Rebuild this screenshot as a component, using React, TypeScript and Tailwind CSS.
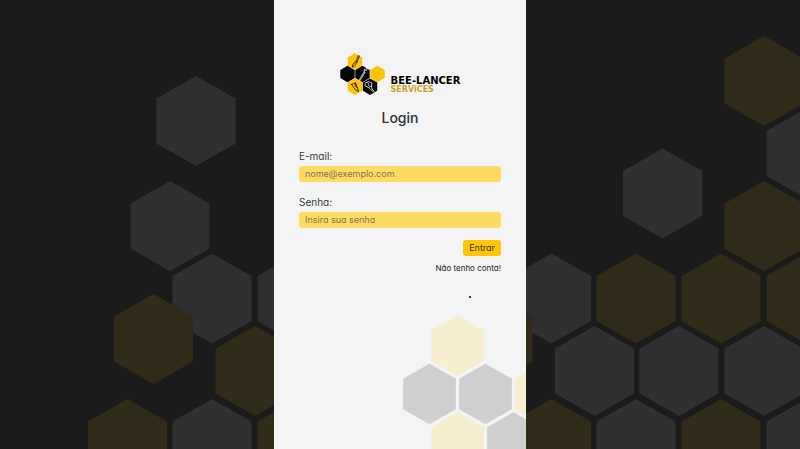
type Tone = "gray" | "gold" | "black" | "yellow" | "stone" | "cream";

type Cell = [number, number, Tone];

const fills: Record<Tone, string> = {
  gray: "#303030",
  gold: "#312c19",
  black: "#050505",
  yellow: "#fcc204",
  stone: "#cfcfcf",
  cream: "#f7eed0",
};

const backdrop: Cell[] = [
  [196, 121, "gray"],
  [170, 226, "gray"],
  [212, 298.5, "gray"],
  [297, 298.5, "gray"],
  [153.5, 339, "gold"],
  [255, 371, "gold"],
  [127.5, 444, "gold"],
  [212, 444, "gray"],
  [297, 444, "gold"],
  [551.5, 298.5, "gray"],
  [493, 339, "gold"],
  [636, 298.5, "gold"],
  [721, 298.5, "gold"],
  [806, 298.5, "gold"],
  [764, 226, "gold"],
  [764, 81, "gold"],
  [806, 153.5, "gray"],
  [662.5, 193.5, "gray"],
  [594.5, 371, "gray"],
  [679, 371, "gray"],
  [764, 371, "gray"],
  [551.5, 444, "gold"],
  [636, 444, "gray"],
  [721, 444, "gold"],
  [806, 444, "gray"],
];

const corner: Cell[] = [
  [54.5, 30.5, "cream"],
  [26.5, 79, "stone"],
  [82.5, 79, "stone"],
  [138.5, 79, "cream"],
  [54.5, 127.5, "cream"],
  [110.5, 127.5, "stone"],
];

const emblem: Cell[] = [
  [15, 8.5, "yellow"],
  [7.5, 21, "black"],
  [22.5, 21, "black"],
  [37.5, 21, "yellow"],
  [15, 33.7, "yellow"],
  [30, 33.7, "black"],
];

function Comb({ cells, w, h }: { cells: Cell[]; w: number; h: number }) {
  return (
    <>
      {cells.map(([x, y, tone]) => (
        <polygon
          key={`${x}-${y}`}
          fill={fills[tone]}
          points={`${x},${y - h} ${x + w},${y - h / 2} ${x + w},${y + h / 2} ${x},${y + h} ${x - w},${y + h / 2} ${x - w},${y - h / 2}`}
        />
      ))}
    </>
  );
}

function Logo() {
  return (
    <div className="flex items-end gap-[6px]">
      <svg viewBox="0 0 45 43" className="h-[43px] w-[45px]" aria-hidden="true">
        <Comb cells={emblem} w={7.2} h={8.2} />
        <g fill="none" strokeWidth="0.8" strokeLinecap="round" strokeLinejoin="round">
          <path stroke="#17130a" d="M18.500 2.500l-2.500 6M19.500 3l-2.500 6M16.500 8.500l-3.500 2.500-.8 3 2-.5 3-4.500" />
          <path stroke="#eee" d="M28.500 15l-4 1.500-.5 2.500-5.500 9M24.500 17l2 .5M24 19l1 .5-5 8M28.500 15l-.5 1.500" />
          <path stroke="#17130a" d="M11.500 31.500l4-1.500 2 5 1 3.500-3-1.500-4-5.500zM15.500 30l-.5 3 2.500 2" />
          <path stroke="#eee" d="M25.500 30l3-1.500 3.500 1.500-.5 3-3 1.500-3-1.500zM28 30l1 2.500M31.500 33l.5 3 2.500 3M29 35l4 3.500" />
        </g>
      </svg>
      <div className="flex flex-col pb-0.5 font-['DejaVu_Sans',sans-serif] font-bold">
        <span className="text-[10px] leading-[10px] text-black">BEE-LANCER</span>
        <span className="text-[8px] leading-[8px] text-[#c9a227]">SERViCES</span>
      </div>
    </div>
  );
}

function Field({ id, label, type, placeholder }: { id: string; label: string; type: string; placeholder: string }) {
  return (
    <div className="flex flex-col gap-[2px]">
      <label htmlFor={id} className="text-[10px] leading-4 text-[#333a42]">
        {label}
      </label>
      <input
        id={id}
        type={type}
        placeholder={placeholder}
        className="h-4 w-full rounded-[3px] bg-[#ffdb64] px-1.5 text-[9px] leading-4 text-[#333a42] outline-none placeholder:text-[#7f754f]"
      />
    </div>
  );
}

export default function App() {
  return (
    <div className="relative isolate flex min-h-screen justify-center overflow-hidden bg-[#1b1b1b] font-['Inter','Noto_Sans',sans-serif] [font-feature-settings:'cv11','ss03']">
      <svg
        viewBox="0 0 800 449"
        preserveAspectRatio="xMidYMid slice"
        className="absolute inset-0 -z-10 h-full w-full"
        aria-hidden="true"
      >
        <Comb cells={backdrop} w={39.5} h={45} />
      </svg>

      <main className="flex w-full max-w-[252px] flex-col overflow-hidden bg-[#f4f4f4]">
        <div className="flex flex-col items-center px-[25px] pt-[53px]">
          <Logo />
          <h1 className="mt-3 text-[14px] leading-5 font-medium text-[#2b3036]">Login</h1>
          <form className="mt-5 flex w-full flex-col gap-3" onSubmit={(e) => e.preventDefault()}>
            <Field id="email" label="E-mail:" type="email" placeholder="nome@exemplo.com" />
            <Field id="senha" label="Senha:" type="password" placeholder="Insira sua senha" />
            <div className="flex flex-col items-end gap-1">
              <button type="submit" className="h-4 rounded-[3px] bg-[#ffc506] px-1.5 text-[9px] leading-4 text-[#40371c]">
                Entrar
              </button>
              <a href="#cadastro" className="text-[8px] leading-4 text-[#202328]">
                Não tenho conta!
              </a>
            </div>
          </form>
          <span className="mt-5 mr-[30px] size-0.5 self-end rounded-[1px] bg-black" />
        </div>
        <svg viewBox="0 0 123 134" className="mt-auto h-[134px] w-[123px] self-end" aria-hidden="true">
          <Comb cells={corner} w={26.3} h={30.3} />
        </svg>
      </main>
    </div>
  );
}
